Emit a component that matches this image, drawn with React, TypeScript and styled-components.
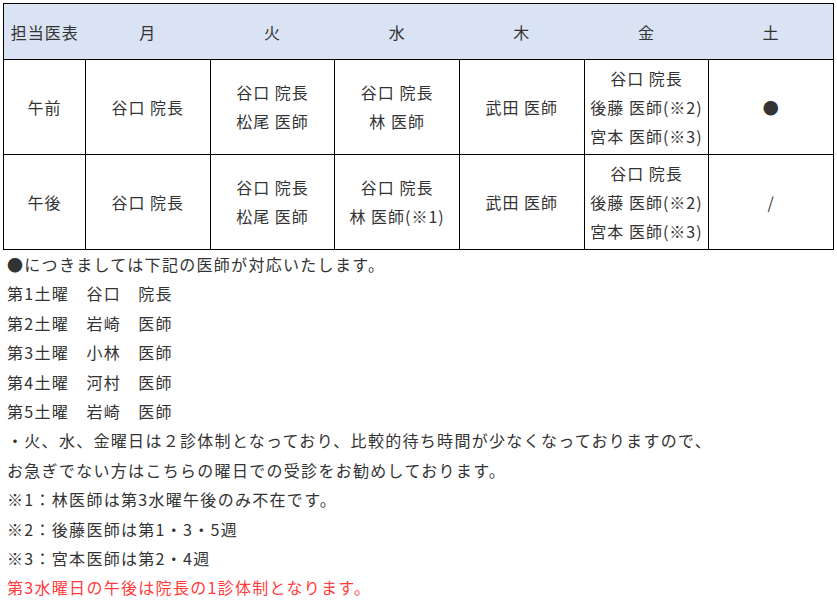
import React from "react";
import styled, { createGlobalStyle } from "styled-components";

const GlobalStyle = createGlobalStyle`
  html, body {
    margin: 0;
    padding: 0;
    background: #fff;
  }
  body {
    font-family: "Noto Sans CJK JP", "Noto Sans", sans-serif;
    color: #333;
  }
`;

const Page = styled.div`
  padding: 3px;
  width: 831px;
`;

const Table = styled.table`
  width: 831px;
  border-collapse: collapse;
  table-layout: fixed;
  font-size: 16px;
  letter-spacing: 1px;
`;

const HeadCell = styled.th<{ $edge?: boolean }>`
  background: #dae3f3;
  border-top: 1px solid #000;
  border-bottom: 1px solid #000;
  border-left: ${(p) => (p.$edge ? "1px solid #000" : "none")};
  height: 55px;
  padding: 0;
  font-weight: 400;
  color: #333;
  text-align: center;
  &:last-child {
    border-right: 1px solid #000;
  }
`;

const Cell = styled.td`
  border: 1px solid #000;
  height: 94px;
  padding: 0;
  text-align: center;
  vertical-align: middle;
  line-height: 29px;
  color: #333;
`;

const Line = styled.div`
  white-space: nowrap;
`;

const Notes = styled.div`
  padding-left: 4px;
  font-size: 16px;
  line-height: 29.4px;
  letter-spacing: 1.3px;
`;

const Note = styled.div<{ $red?: boolean }>`
  color: ${(p) => (p.$red ? "#ff3b3b" : "#333")};
  white-space: nowrap;
`;

const days = ["月", "火", "水", "木", "金", "土"];

const rows: { label: string; cells: string[][] }[] = [
  {
    label: "午前",
    cells: [
      ["谷口 院長"],
      ["谷口 院長", "松尾 医師"],
      ["谷口 院長", "林 医師"],
      ["武田 医師"],
      ["谷口 院長", "後藤 医師(※2)", "宮本 医師(※3)"],
      ["●"],
    ],
  },
  {
    label: "午後",
    cells: [
      ["谷口 院長"],
      ["谷口 院長", "松尾 医師"],
      ["谷口 院長", "林 医師(※1)"],
      ["武田 医師"],
      ["谷口 院長", "後藤 医師(※2)", "宮本 医師(※3)"],
      ["/"],
    ],
  },
];

const notes = [
  "●につきましては下記の医師が対応いたします。",
  "第1土曜　谷口　院長",
  "第2土曜　岩崎　医師",
  "第3土曜　小林　医師",
  "第4土曜　河村　医師",
  "第5土曜　岩崎　医師",
  "・火、水、金曜日は２診体制となっており、比較的待ち時間が少なくなっておりますので、",
  "お急ぎでない方はこちらの曜日での受診をお勧めしております。",
  "※1：林医師は第3水曜午後のみ不在です。",
  "※2：後藤医師は第1・3・5週",
  "※3：宮本医師は第2・4週",
];

const App: React.FC = () => {
  return (
    <Page>
      <GlobalStyle />
      <Table>
        <colgroup>
          <col style={{ width: 82 }} />
          {days.map((d) => (
            <col key={d} />
          ))}
        </colgroup>
        <thead>
          <tr>
            <HeadCell $edge>担当医表</HeadCell>
            {days.map((d) => (
              <HeadCell key={d}>{d}</HeadCell>
            ))}
          </tr>
        </thead>
        <tbody>
          {rows.map((r) => (
            <tr key={r.label}>
              <Cell>{r.label}</Cell>
              {r.cells.map((c, i) => (
                <Cell key={i}>
                  {c.map((l) => (
                    <Line key={l}>{l}</Line>
                  ))}
                </Cell>
              ))}
            </tr>
          ))}
        </tbody>
      </Table>
      <Notes>
        {notes.map((n) => (
          <Note key={n}>{n}</Note>
        ))}
        <Note $red>第3水曜日の午後は院長の1診体制となります。</Note>
      </Notes>
    </Page>
  );
};

export default App;
